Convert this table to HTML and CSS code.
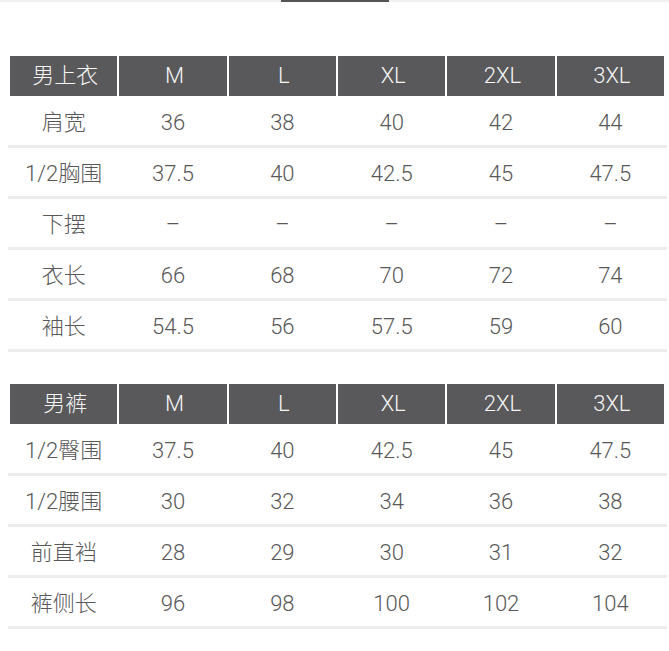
FILE: index.html
```html
<!DOCTYPE html>
<html lang="zh-CN">
<head>
<meta charset="utf-8">
<title>尺码表</title>
<link rel="stylesheet" href="styles.css">
</head>
<body>
<div class="topbar"><div class="indicator"></div></div>

<section class="size-table first">
  <div class="head">
    <div>男上衣</div><div>M</div><div>L</div><div>XL</div><div>2XL</div><div>3XL</div>
  </div>
  <div class="row"><div class="cells"><div>肩宽</div><div>36</div><div>38</div><div>40</div><div>42</div><div>44</div></div></div>
  <div class="row"><div class="cells"><div>1/2胸围</div><div>37.5</div><div>40</div><div>42.5</div><div>45</div><div>47.5</div></div></div>
  <div class="row"><div class="cells"><div>下摆</div><div>–</div><div>–</div><div>–</div><div>–</div><div>–</div></div></div>
  <div class="row"><div class="cells"><div>衣长</div><div>66</div><div>68</div><div>70</div><div>72</div><div>74</div></div></div>
  <div class="row"><div class="cells"><div>袖长</div><div>54.5</div><div>56</div><div>57.5</div><div>59</div><div>60</div></div></div>
</section>

<section class="size-table second">
  <div class="head">
    <div>男裤</div><div>M</div><div>L</div><div>XL</div><div>2XL</div><div>3XL</div>
  </div>
  <div class="row"><div class="cells"><div>1/2臀围</div><div>37.5</div><div>40</div><div>42.5</div><div>45</div><div>47.5</div></div></div>
  <div class="row"><div class="cells"><div>1/2腰围</div><div>30</div><div>32</div><div>34</div><div>36</div><div>38</div></div></div>
  <div class="row"><div class="cells"><div>前直裆</div><div>28</div><div>29</div><div>30</div><div>31</div><div>32</div></div></div>
  <div class="row"><div class="cells"><div>裤侧长</div><div>96</div><div>98</div><div>100</div><div>102</div><div>104</div></div></div>
</section>
</body>
</html>
```

FILE: styles.css
```css
html, body {
  margin: 0;
  padding: 0;
  background: #ffffff;
}

body {
  width: 669px;
  font-family: "Roboto", "Noto Sans CJK SC", sans-serif;
  font-weight: 300;
  color: #585858;
}

.topbar {
  height: 2px;
  background: #f0f0f0;
  display: flex;
  justify-content: center;
}

.indicator {
  width: 108px;
  background: #555555;
}

.size-table.first {
  margin-top: 54px;
}

.size-table.second {
  margin-top: 32px;
}

.head {
  margin: 0 5px 1px 10px;
  display: grid;
  grid-template-columns: repeat(6, 1fr);
  column-gap: 2px;
  height: 40px;
}

.head > div {
  background: #59595b;
  color: #f5f5f5;
  font-size: 22px;
  line-height: 26px;
  display: flex;
  align-items: center;
  justify-content: center;
  padding-left: 3px;
}

.row {
  margin: 0 2px 0 8px;
  border-bottom: 3px solid #ededed;
}

.cells {
  padding: 0 3px 0 2px;
  display: grid;
  grid-template-columns: repeat(6, 1fr);
  column-gap: 2px;
  height: 48px;
}

.cells > div {
  font-size: 22px;
  line-height: 26px;
  display: flex;
  align-items: center;
  justify-content: center;
  padding-top: 3px;
}
```
